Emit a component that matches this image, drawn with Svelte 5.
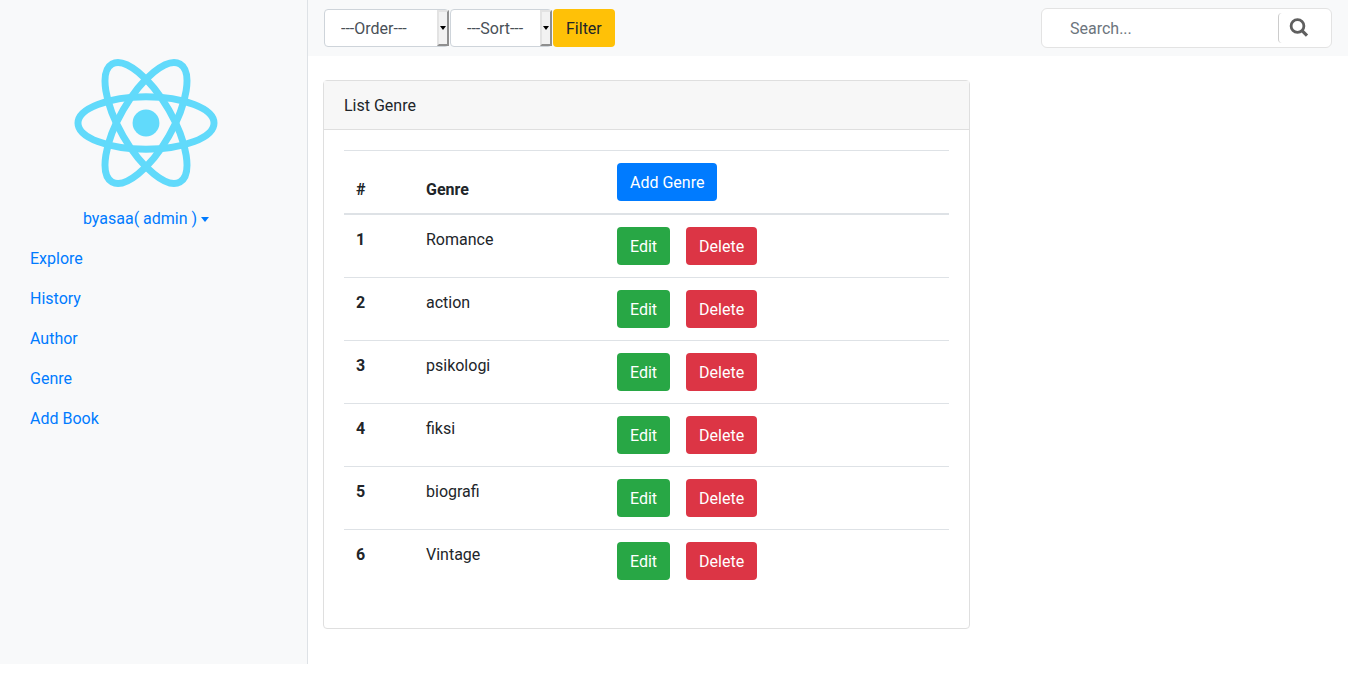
<script>
  const links = ['Explore', 'History', 'Author', 'Genre', 'Add Book'];
  const genres = ['Romance', 'action', 'psikologi', 'fiksi', 'biografi', 'Vintage'];
  let query = $state('');
</script>

<div class="page">
  <aside class="sidebar">
    <svg class="logo" viewBox="-145 -130 290 260" role="img" aria-label="React">
      <circle r="27" fill="#61dafb" />
      <g fill="none" stroke="#61dafb" stroke-width="14">
        <ellipse rx="137" ry="53" />
        <ellipse rx="137" ry="53" transform="rotate(60)" />
        <ellipse rx="137" ry="53" transform="rotate(120)" />
      </g>
    </svg>
    <button class="user" type="button">byasaa( admin )<span class="caret"></span></button>
    <nav class="links">
      {#each links as link}
        <a href="#{link}">{link}</a>
      {/each}
    </nav>
  </aside>

  <div class="content">
    <header class="topbar">
      <form class="filters">
        <span class="picker">
          <select class="order" aria-label="Order"><option>---Order---</option></select>
          <span class="arrow"></span>
        </span>
        <span class="picker">
          <select class="sort" aria-label="Sort"><option>---Sort---</option></select>
          <span class="arrow"></span>
        </span>
        <button class="btn warning" type="button">Filter</button>
      </form>
      <form class="search">
        <input type="text" placeholder="Search..." aria-label="Search" bind:value={query} />
        <button type="button" aria-label="Submit search">
          <svg viewBox="0 0 20 20" fill="none" stroke="#5f5f5f">
            <circle cx="8.5" cy="8" r="6.4" stroke-width="2.8" />
            <path d="M13 12.6L18 17.6" stroke-width="3.2" />
          </svg>
        </button>
      </form>
    </header>

    <main>
      <section class="card">
        <div class="card-header">List Genre</div>
        <div class="card-body">
          <table>
            <thead>
              <tr>
                <th class="num" scope="col">#</th>
                <th class="name" scope="col">Genre</th>
                <th scope="col"><button class="btn primary" type="button">Add Genre</button></th>
              </tr>
            </thead>
            <tbody>
              {#each genres as genre, i}
                <tr>
                  <th scope="row">{i + 1}</th>
                  <td>{genre}</td>
                  <td>
                    <div class="actions">
                      <button class="btn success" type="button">Edit</button>
                      <button class="btn danger" type="button">Delete</button>
                    </div>
                  </td>
                </tr>
              {/each}
            </tbody>
          </table>
        </div>
      </section>
    </main>
  </div>
</div>

<style>
  :global(body) {
    margin: 0;
    background: #fff;
    color: #212529;
    font: 16px/24px Roboto, sans-serif;
  }
  :global(*) {
    box-sizing: border-box;
  }
  button,
  input,
  select {
    margin: 0;
    font: inherit;
  }
  .page {
    display: grid;
    grid-template-columns: 308px minmax(0, 1fr);
    margin-right: 6px;
  }
  .sidebar {
    display: flex;
    flex-direction: column;
    height: calc(100vh - 13px);
    padding: 58px 15px 0 0;
    border-right: 1px solid #dee2e6;
    background: #f8f9fa;
  }
  .logo {
    align-self: center;
    width: 144px;
    height: 130px;
  }
  .user {
    display: flex;
    align-items: center;
    align-self: center;
    gap: 4px;
    margin-top: 19px;
    padding: 0;
    border: 0;
    background: none;
    color: #007bff;
  }
  .caret {
    border: 5px solid transparent;
    border-top-color: currentColor;
    border-bottom: 0;
    border-right-width: 4px;
    border-left-width: 4px;
  }
  .links {
    display: flex;
    flex-direction: column;
    padding: 8px 14px;
  }
  .links a {
    padding: 8px 16px;
    color: #007bff;
    text-decoration: none;
  }
  .topbar {
    display: flex;
    align-items: center;
    justify-content: space-between;
    height: 56px;
    padding: 0 16px;
    background: #f8f9fa;
  }
  .filters {
    display: flex;
    gap: 1px;
  }
  .picker {
    display: grid;
    grid-template-columns: minmax(0, 1fr) 12px;
  }
  .picker select {
    grid-area: 1 / 1 / 2 / 3;
    height: 38px;
    padding: 7px 12px 5px 16px;
    border: 1px solid #ced4da;
    border-radius: 4px;
    background: #fff;
    color: #495057;
    appearance: none;
  }
  .order {
    width: 125px;
  }
  .sort {
    width: 102px;
  }
  .arrow {
    display: grid;
    grid-area: 1 / 2;
    place-items: center;
    height: 36px;
    margin-top: 1px;
    border: 2px solid;
    border-color: #e3e3e3 #8f8f8f #8f8f8f #e3e3e3;
    background: #f2f2f2;
    pointer-events: none;
  }
  .arrow::after {
    content: '';
    border: 3px solid transparent;
    border-top: 4px solid #000;
    border-bottom: 0;
  }
  .btn {
    padding: 7px 12px 5px;
    border: 1px solid transparent;
    border-radius: 4px;
    color: #fff;
    font-weight: 400;
  }
  .primary {
    background: #007bff;
  }
  .success {
    background: #28a745;
  }
  .danger {
    background: #dc3545;
  }
  .warning {
    background: #ffc107;
    color: #212529;
  }
  .search {
    display: flex;
    align-items: center;
    width: 291px;
    height: 40px;
    border: 1px solid #e3e3e3;
    border-radius: 6px;
    background: #fff;
  }
  .search input {
    flex: 1;
    min-width: 0;
    padding: 2px 0 0 28px;
    border: 0;
    outline: 0;
    background: none;
  }
  .search input::placeholder {
    color: #6c757d;
  }
  .search button {
    display: flex;
    align-items: center;
    width: 53px;
    height: 30px;
    padding: 0 10px;
    border: 0;
    border-left: 1px solid #ccc;
    border-radius: 4px;
    background: none;
  }
  .search svg {
    width: 20px;
    height: 20px;
  }
  main {
    padding: 24px 14px 24px 15px;
  }
  .card {
    width: 64%;
    border: 1px solid #dfdfdf;
    border-radius: 4px;
  }
  .card-header {
    padding: 13px 20px 11px;
    border-bottom: 1px solid #dfdfdf;
    background: #f7f7f7;
  }
  .card-body {
    padding: 20px 20px 36px;
  }
  table {
    width: 100%;
    border-collapse: collapse;
    table-layout: fixed;
    line-height: 26px;
  }
  .num {
    width: 70px;
  }
  .name {
    width: 191px;
  }
  th,
  td {
    padding: 12px;
    border-top: 1px solid #dee2e6;
    text-align: left;
    vertical-align: top;
  }
  thead th {
    border-bottom: 2px solid #dee2e6;
    vertical-align: bottom;
  }
  thead .num,
  thead .name {
    padding-bottom: 10px;
  }
  table .btn {
    display: block;
    line-height: 24px;
  }
  .actions {
    display: flex;
    gap: 16px;
  }
</style>
